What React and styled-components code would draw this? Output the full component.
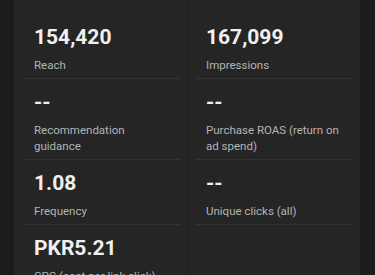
import React from "react";
import styled, { createGlobalStyle } from "styled-components";

const Global = createGlobalStyle`
  html, body { margin: 0; padding: 0; background: #1c1c1c; }
  body { font-family: Roboto, "Noto Sans", "Liberation Sans", sans-serif; -webkit-font-smoothing: antialiased; }
`;

const Page = styled.div`
  padding: 0 15px 0 14px;
  height: 275px;
  overflow: hidden;
`;

const Card = styled.div`
  background: #252525;
  display: flex;
  min-height: 300px;
  padding-top: 14px;
`;

const Column = styled.div`
  flex: 1;
  display: flex;
  flex-direction: column;
  padding: ${(p) => (p.$side === "left" ? "0 7px 0 10px" : "0 8px 0 8px")};
`;

const Divider = styled.div`
  width: 1px;
  background: #1e1e1e;
  margin-top: -14px;
`;

const Cell = styled.div`
  padding: 11px 10px 5px 10px;
  border-bottom: 1px solid #333333;
`;

const Value = styled.div`
  font-size: 21px;
  font-weight: 700;
  line-height: 24px;
  color: #f0f0f0;
`;

const Label = styled.div`
  margin-top: 8px;
  font-size: 11.5px;
  line-height: 16px;
  color: #b4b4b4;
`;

const left = [
  ["154,420", "Reach"],
  ["--", "Recommendation guidance"],
  ["1.08", "Frequency"],
  ["PKR5.21", "CPC (cost per link click)"],
];
const right = [
  ["167,099", "Impressions"],
  ["--", "Purchase ROAS (return on ad spend)"],
  ["--", "Unique clicks (all)"],
];

export default function App() {
  return (
    <>
      <Global />
      <Page>
        <Card>
          <Column $side="left">
            {left.map(([v, l]) => (
              <Cell key={l}>
                <Value>{v}</Value>
                <Label>{l}</Label>
              </Cell>
            ))}
          </Column>
          <Divider />
          <Column $side="right">
            {right.map(([v, l]) => (
              <Cell key={l}>
                <Value>{v}</Value>
                <Label>{l}</Label>
              </Cell>
            ))}
          </Column>
        </Card>
      </Page>
    </>
  );
}
